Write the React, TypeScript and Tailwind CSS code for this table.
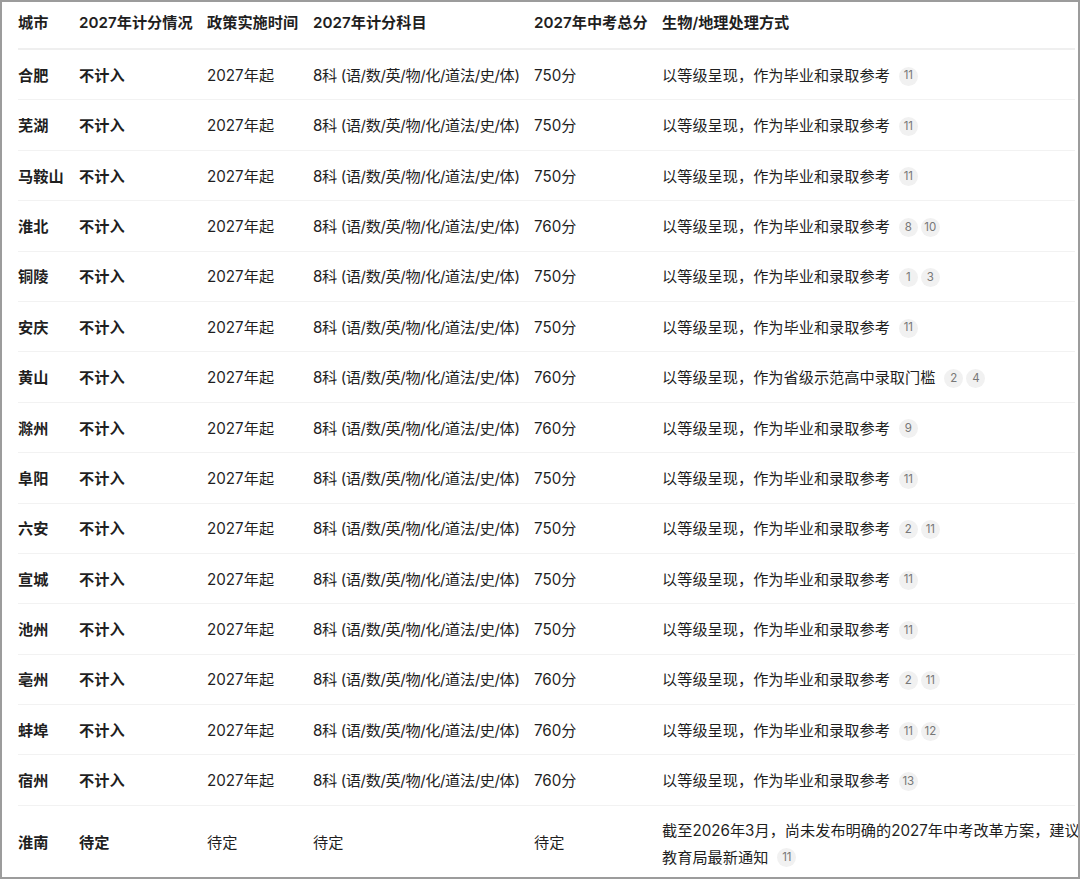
const rows: [string, string, string[]][] = [
  ["合肥", "750分", ["11"]],
  ["芜湖", "750分", ["11"]],
  ["马鞍山", "750分", ["11"]],
  ["淮北", "760分", ["8", "10"]],
  ["铜陵", "750分", ["1", "3"]],
  ["安庆", "750分", ["11"]],
  ["黄山", "760分", ["2", "4"]],
  ["滁州", "760分", ["9"]],
  ["阜阳", "750分", ["11"]],
  ["六安", "750分", ["2", "11"]],
  ["宣城", "750分", ["11"]],
  ["池州", "750分", ["11"]],
  ["亳州", "760分", ["2", "11"]],
  ["蚌埠", "760分", ["11", "12"]],
  ["宿州", "760分", ["13"]],
];

const cols = "grid grid-cols-[61px_128px_106px_221px_128px_1fr]";

function Badges({ refs }: { refs: string[] }) {
  return (
    <span className="ml-[9px] inline-flex gap-[3px] align-middle">
      {refs.map((r, i) => (
        <span
          key={i}
          className="flex h-[19px] min-w-[19px] items-center justify-center rounded-full bg-[#f1f1f1] px-[3px] text-[11.5px] leading-none text-[#777]"
        >
          {r}
        </span>
      ))}
    </span>
  );
}

export default function App() {
  return (
    <div
      className="h-[879px] w-[1080px] overflow-hidden border-2 border-[#9c9c9c] bg-white text-[15.2px] text-[#1f1f1f]"
      style={{ fontFamily: 'Inter, "Noto Sans CJK SC", sans-serif' }}
    >
      <div className="w-[1180px] pl-4">
        <div className={`${cols} h-[48px] w-[1057px] items-center border-b-2 border-[#efefef] pb-[4px] font-semibold`}>
          <div>城市</div>
          <div>2027年计分情况</div>
          <div>政策实施时间</div>
          <div>2027年计分科目</div>
          <div>2027年中考总分</div>
          <div>生物/地理处理方式</div>
        </div>
        {rows.map(([city, total, refs]) => (
          <div
            key={city}
            className={`${cols} h-[50.4px] w-[1057px] items-center border-b border-[#f2f2f2] pt-[3px]`}
          >
            <div className="font-semibold">{city}</div>
            <div className="font-semibold">不计入</div>
            <div>2027年起</div>
            <div className="tracking-[-0.4px]">8科 (语/数/英/物/化/道法/史/体)</div>
            <div>{total}</div>
            <div className="flex items-center whitespace-nowrap">
              {refs[0] === "2" && refs[1] === "4"
                ? "以等级呈现，作为省级示范高中录取门槛"
                : "以等级呈现，作为毕业和录取参考"}
              <Badges refs={refs} />
            </div>
          </div>
        ))}
        <div className={`${cols} h-[73px] w-[1057px] items-center pt-[3px]`}>
          <div className="font-semibold">淮南</div>
          <div className="font-semibold">待定</div>
          <div>待定</div>
          <div>待定</div>
          <div>待定</div>
          <div className="whitespace-nowrap leading-[27px]">
            <div>截至2026年3月，尚未发布明确的2027年中考改革方案，建议</div>
            <div className="flex items-center">
              教育局最新通知
              <Badges refs={["11"]} />
            </div>
          </div>
        </div>
      </div>
    </div>
  );
}
